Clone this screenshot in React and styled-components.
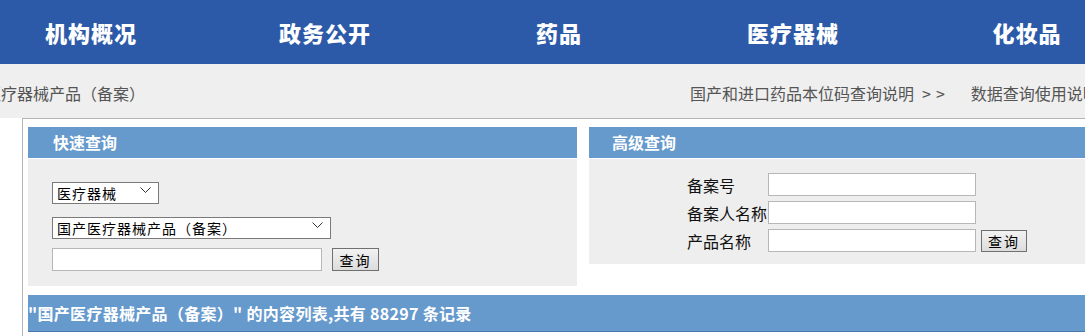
import styled, { createGlobalStyle } from "styled-components";

const GlobalStyle = createGlobalStyle`
  html, body {
    margin: 0;
    padding: 0;
    background: #fff;
    overflow: hidden;
  }
  body {
    width: 1085px;
    height: 336px;
    font-family: "Noto Sans CJK SC", "Noto Sans", sans-serif;
  }
`;

const navItems = ["机构概况", "政务公开", "药品", "医疗器械", "化妆品"];

function Chevron() {
  return (
    <svg width="11" height="7" viewBox="0 0 11 7">
      <path d="M0.5 0.5 L5.5 5.5 L10.5 0.5" fill="none" stroke="#333" strokeWidth="1" />
    </svg>
  );
}

function App() {
  return (
    <Page>
      <GlobalStyle />
      <Nav>
        {navItems.map((item) => (
          <NavItem key={item}>{item}</NavItem>
        ))}
      </Nav>
      <Crumbs>
        <CrumbPath>
          <span>医疗器械产品（备案）</span>
        </CrumbPath>
        <CrumbLink>国产和进口药品本位码查询说明<More>&gt;&gt;</More></CrumbLink>
        <CrumbLink $gap>数据查询使用说明<More>&gt;&gt;</More></CrumbLink>
      </Crumbs>
      <Box>
        <Panels>
          <Panel $width={549}>
            <PanelHead $pad={25}>快速查询</PanelHead>
            <QuickBody>
              <SelectWrap $width={107}>
                <Select defaultValue="1">
                  <option value="1">医疗器械</option>
                </Select>
                <Arrow><Chevron /></Arrow>
              </SelectWrap>
              <SelectWrap $width={279} $open>
                <Select defaultValue="1">
                  <option value="1">国产医疗器械产品（备案）</option>
                </Select>
                <Arrow><Chevron /></Arrow>
              </SelectWrap>
              <InlineRow>
                <TextInput $width={270} />
                <Button $width={47}>查询</Button>
              </InlineRow>
            </QuickBody>
          </Panel>
          <Panel $width={560}>
            <PanelHead $pad={23}>高级查询</PanelHead>
            <AdvBody>
              <FieldRow>
                <Label>备案号</Label>
                <TextInput $width={208} />
              </FieldRow>
              <FieldRow>
                <Label>备案人名称</Label>
                <TextInput $width={208} />
              </FieldRow>
              <FieldRow>
                <Label>产品名称</Label>
                <TextInput $width={208} />
                <Button $width={46} $small>查询</Button>
              </FieldRow>
            </AdvBody>
          </Panel>
        </Panels>
        <ResultBar>"国产医疗器械产品（备案）" 的内容列表,共有 88297 条记录</ResultBar>
      </Box>
    </Page>
  );
}

const Page = styled.div`
  width: 1085px;
  height: 336px;
  overflow: hidden;
`;

const Nav = styled.div`
  height: 64px;
  background: #2c5aa9;
  display: flex;
  margin-left: -26px;
  width: 1200px;
`;

const NavItem = styled.div`
  width: 234px;
  flex-shrink: 0;
  text-align: center;
  line-height: 64px;
  color: #fff;
  font-size: 22px;
  font-weight: 900;
  letter-spacing: 1px;
`;

const Crumbs = styled.div`
  height: 54px;
  background: #efefef;
  display: flex;
  align-items: center;
  padding-top: 3px;
  box-sizing: border-box;
  white-space: nowrap;
  overflow: hidden;
  font-size: 16px;
  color: #555;
`;

const CrumbPath = styled.div`
  width: 690px;
  flex-shrink: 0;
  overflow: hidden;
  span {
    display: inline-block;
    margin-left: -15px;
  }
`;

const CrumbLink = styled.div`
  flex-shrink: 0;
  margin-left: ${(p) => (p.$gap ? "21px" : "0")};
`;

const More = styled.span`
  margin-left: 8px;
  letter-spacing: 5px;
`;

const Box = styled.div`
  margin-left: 22px;
  border-top: 1px solid #b4b4b4;
  border-left: 1px solid #b4b4b4;
  padding: 8px 0 0 5px;
  height: 300px;
`;

const Panels = styled.div`
  display: flex;
  align-items: flex-start;
  gap: 12px;
  width: 1200px;
`;

const Panel = styled.div`
  width: ${(p) => p.$width}px;
  flex-shrink: 0;
`;

const PanelHead = styled.div`
  height: 31px;
  line-height: 30px;
  background: #6699cc;
  color: #fff;
  font-size: 16px;
  font-weight: bold;
  padding-left: ${(p) => p.$pad}px;
  margin-bottom: 1px;
`;

const QuickBody = styled.div`
  background: #eeeeee;
  height: 127px;
  box-sizing: border-box;
  padding: 21px 0 0 24px;
  display: flex;
  flex-direction: column;
  align-items: flex-start;
`;

const SelectWrap = styled.div`
  position: relative;
  width: ${(p) => p.$width}px;
  height: 22px;
  margin-bottom: ${(p) => (p.$open ? "11px" : "13px")};
`;

const Select = styled.select`
  appearance: none;
  width: 100%;
  height: 100%;
  box-sizing: border-box;
  border: 1px solid #7a7a7a;
  border-radius: 0;
  background: #fff;
  padding: 0 0 0 4px;
  font-family: "Noto Sans CJK SC", sans-serif;
  font-size: 14px;
  letter-spacing: 1px;
  color: #000;
  outline: none;
`;

const Arrow = styled.span`
  position: absolute;
  right: 8px;
  top: 7px;
  pointer-events: none;
  display: flex;
`;

const InlineRow = styled.div`
  display: flex;
  align-items: center;
  gap: 10px;
`;

const TextInput = styled.input`
  width: ${(p) => p.$width}px;
  height: 23px;
  box-sizing: border-box;
  border: 1px solid #b7b7b7;
  background: #fff;
  margin: 0;
  outline: none;
`;

const Button = styled.button`
  width: ${(p) => p.$width}px;
  height: ${(p) => (p.$small ? 22 : 23)}px;
  margin: 0 0 0 ${(p) => (p.$small ? "5px" : "0")};
  padding: 0;
  border: 1px solid #707070;
  border-radius: 0;
  background: linear-gradient(#f2f2f2, #dcdcdc);
  font-family: "Noto Sans CJK SC", sans-serif;
  font-size: 14px;
  letter-spacing: 2px;
  color: #000;
`;

const AdvBody = styled.div`
  background: #eeeeee;
  height: 105px;
  box-sizing: border-box;
  padding: 14px 0 0 98px;
  display: flex;
  flex-direction: column;
  gap: 5px;
`;

const FieldRow = styled.div`
  display: flex;
  align-items: center;
  height: 23px;
`;

const Label = styled.div`
  width: 81px;
  flex-shrink: 0;
  font-size: 16px;
  color: #111;
  white-space: nowrap;
  line-height: 23px;
  padding-top: 2px;
`;

const ResultBar = styled.div`
  margin-top: 9px;
  height: 36px;
  line-height: 36px;
  background: #6699cc;
  border-bottom: 1px solid #4a78aa;
  color: #fff;
  font-size: 16px;
  font-weight: bold;
  letter-spacing: 0.3px;
  white-space: nowrap;
`;

export default App;
